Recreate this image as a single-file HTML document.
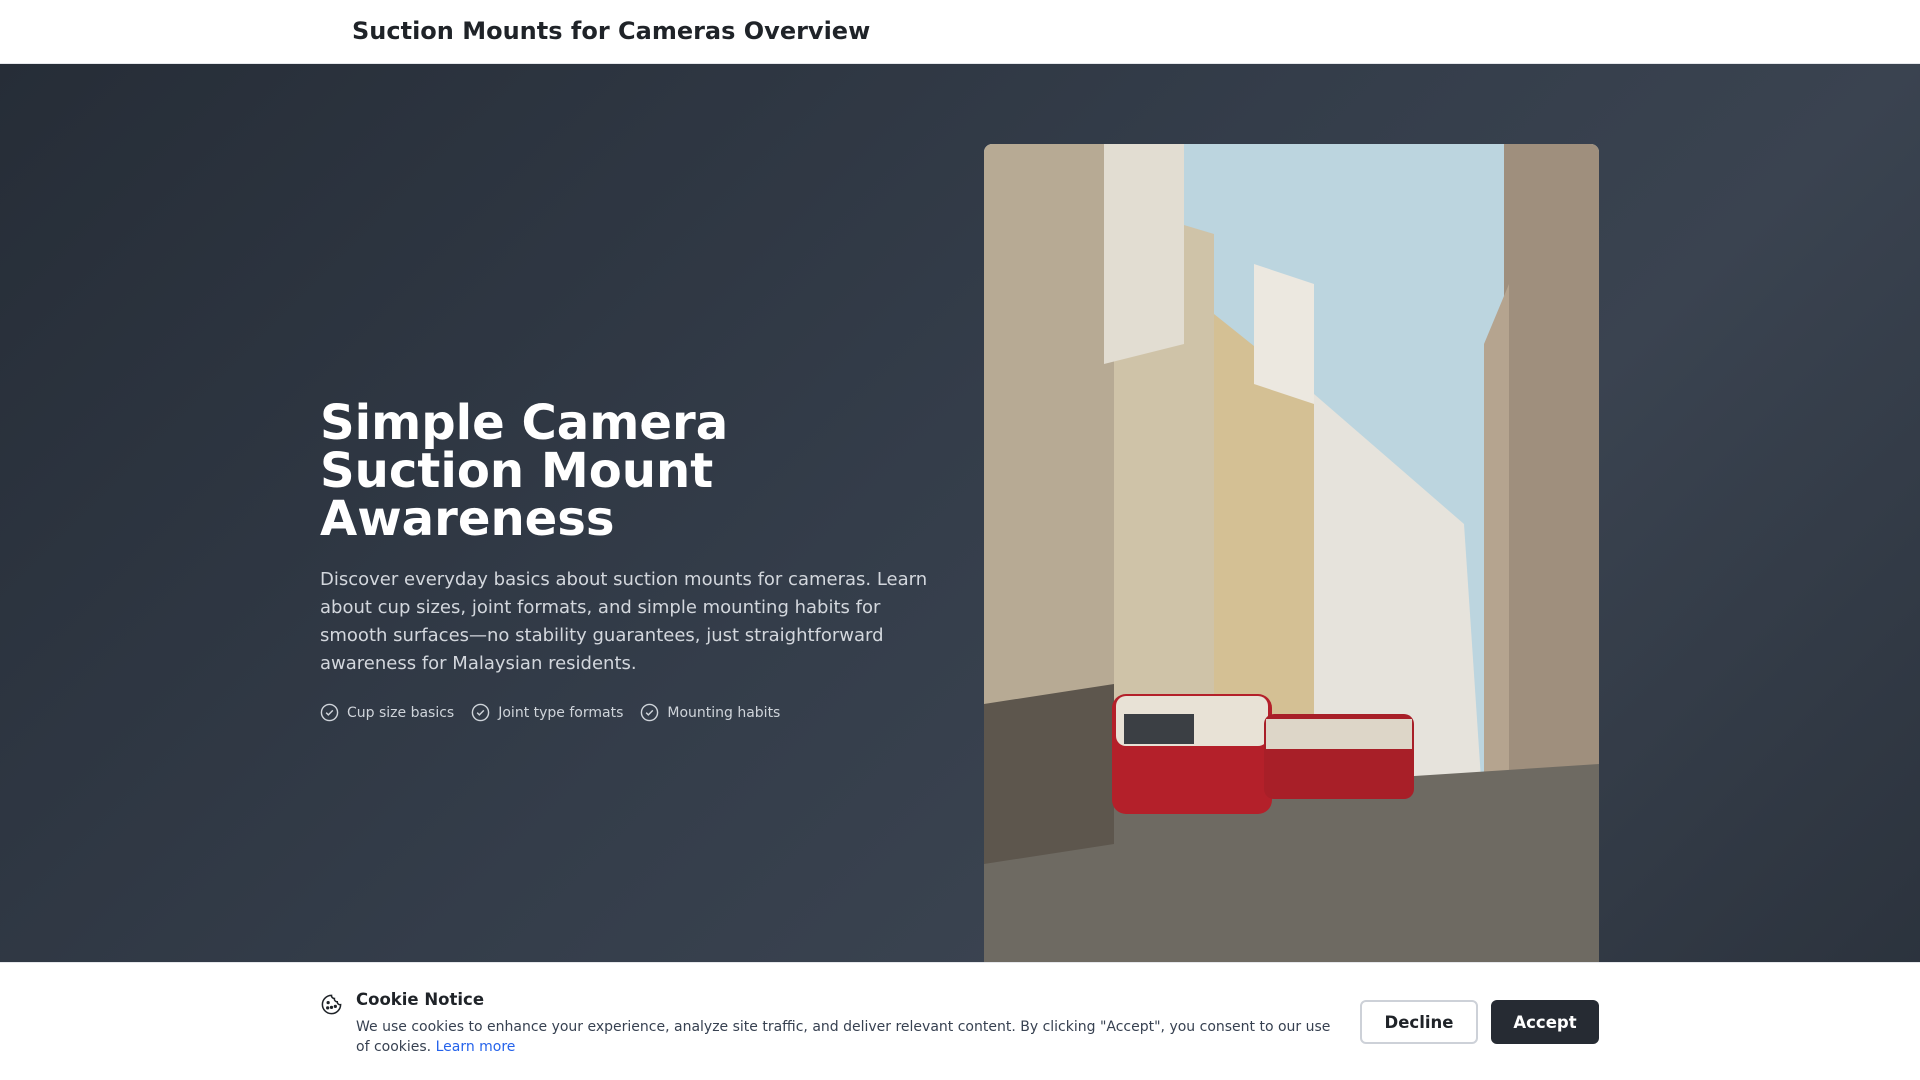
<!DOCTYPE html>
<html><head><meta charset="utf-8"><style>
*{margin:0;padding:0;box-sizing:border-box}
body{width:1920px;height:1080px;overflow:hidden;font-family:"DejaVu Sans","Liberation Sans",sans-serif;background:#fff;position:relative}
.hdr{height:64px;background:#fff;border-bottom:1px solid #e5e7eb;position:relative}
.hdr h1{position:absolute;left:352px;top:17px;font-size:24px;font-weight:bold;color:#1f2328}
.hero{position:absolute;top:64px;left:0;width:1920px;height:1016px;background:linear-gradient(135deg,#262d37 0%,#343d4a 45%,#3a4350 65%,#2a313b 100%)}
.h2{position:absolute;left:320px;font-size:48.1px;line-height:48px;font-weight:bold;color:#fff;width:600px}
.p{position:absolute;left:320px;width:620px;font-size:18px;line-height:28px;color:#d3d7dd}
.feat{position:absolute;left:320px;display:flex;gap:17px;font-size:14px;color:#cfd4da}
.feat span{display:flex;align-items:center;gap:8px}
.img{position:absolute;left:984px;width:615px;height:830px;border-radius:8px;overflow:hidden}
.ck{position:absolute;top:962px;left:0;width:1920px;height:118px;background:#fff;border-top:1px solid #e5e7eb}
.ck h3{position:absolute;left:356px;top:27px;font-size:16.5px;font-weight:bold;color:#1f2328}
.ck p{position:absolute;left:356px;top:54px;width:985px;font-size:14px;line-height:20px;color:#374151}
.ck a{color:#2563eb;text-decoration:none}
.btn{position:absolute;top:37px;height:44px;border-radius:6px;font-size:16.5px;font-weight:bold;display:flex;align-items:center;justify-content:center}
</style></head><body>
<div class="hdr"><h1>Suction Mounts for Cameras Overview</h1></div>
<div class="hero">
<div class="h2" style="top:335px">Simple Camera Suction Mount Awareness</div>
<div class="p" style="top:502px">Discover everyday basics about suction mounts for cameras. Learn about cup sizes, joint formats, and simple mounting habits for smooth surfaces—no stability guarantees, just straightforward awareness for Malaysian residents.</div>
<div class="feat" style="top:639px">
<span><svg width="19" height="19" viewBox="0 0 20 20" fill="none" stroke="#cfd4da" stroke-width="1.5"><circle cx="10" cy="10" r="8.5"/><path d="M6.5 10.2l2.3 2.3 4.7-4.7"/></svg>Cup size basics</span>
<span><svg width="19" height="19" viewBox="0 0 20 20" fill="none" stroke="#cfd4da" stroke-width="1.5"><circle cx="10" cy="10" r="8.5"/><path d="M6.5 10.2l2.3 2.3 4.7-4.7"/></svg>Joint type formats</span>
<span><svg width="19" height="19" viewBox="0 0 20 20" fill="none" stroke="#cfd4da" stroke-width="1.5"><circle cx="10" cy="10" r="8.5"/><path d="M6.5 10.2l2.3 2.3 4.7-4.7"/></svg>Mounting habits</span>
</div>
<div class="img" style="top:80px">
<svg width="615" height="830" viewBox="0 0 615 830">
<rect width="615" height="830" fill="#bcd5df"/>
<polygon points="0,0 140,0 140,830 0,830" fill="#b7aa94"/>
<polygon points="130,60 230,90 230,760 130,780" fill="#cfc3a8"/>
<polygon points="120,0 200,0 200,200 120,220" fill="#e2ddd2"/>
<polygon points="230,170 330,250 330,700 230,720" fill="#d4c094"/>
<polygon points="330,250 480,380 500,680 330,700" fill="#e6e3dc"/>
<polygon points="270,120 330,140 330,260 270,240" fill="#ece8e0"/>
<polygon points="520,0 615,0 615,830 520,830" fill="#9f8f7d"/>
<polygon points="500,200 525,140 525,720 500,700" fill="#b5a48f"/>
<polygon points="0,660 615,620 615,830 0,830" fill="#6e6a62"/>
<polygon points="0,560 130,540 130,700 0,720" fill="#5d564d"/>
<rect x="128" y="550" width="160" height="120" rx="14" fill="#b4202a"/>
<rect x="132" y="552" width="152" height="50" rx="10" fill="#e8e2d6"/>
<rect x="140" y="570" width="70" height="30" fill="#3b3f44"/>
<rect x="280" y="570" width="150" height="85" rx="10" fill="#a81f28"/>
<rect x="282" y="575" width="146" height="30" fill="#ddd6c8"/>
</svg>
</div>
</div>
<div class="ck">
<svg style="position:absolute;left:320px;top:30px" width="23" height="23" viewBox="0 0 24 24" fill="none" stroke="#1f2328" stroke-width="1.6"><path d="M12 2.5a9.5 9.5 0 1 0 9.5 9.7 3 3 0 0 1-3.5-3 3 3 0 0 1-3-3.5 3 3 0 0 1-3-3.2z"/><circle cx="8.5" cy="10" r=".9" fill="#1f2328"/><circle cx="12" cy="15" r=".9" fill="#1f2328"/><circle cx="16" cy="14" r=".9" fill="#1f2328"/><circle cx="8" cy="15.5" r=".9" fill="#1f2328"/></svg>
<h3>Cookie Notice</h3>
<p>We use cookies to enhance your experience, analyze site traffic, and deliver relevant content. By clicking "Accept", you consent to our use of cookies. <a>Learn more</a></p>
<div class="btn" style="left:1360px;width:118px;border:2px solid #cdd1d8;background:#fff;color:#1f2328">Decline</div>
<div class="btn" style="left:1491px;width:108px;background:#262b33;color:#fff">Accept</div>
</div>
</body></html>
